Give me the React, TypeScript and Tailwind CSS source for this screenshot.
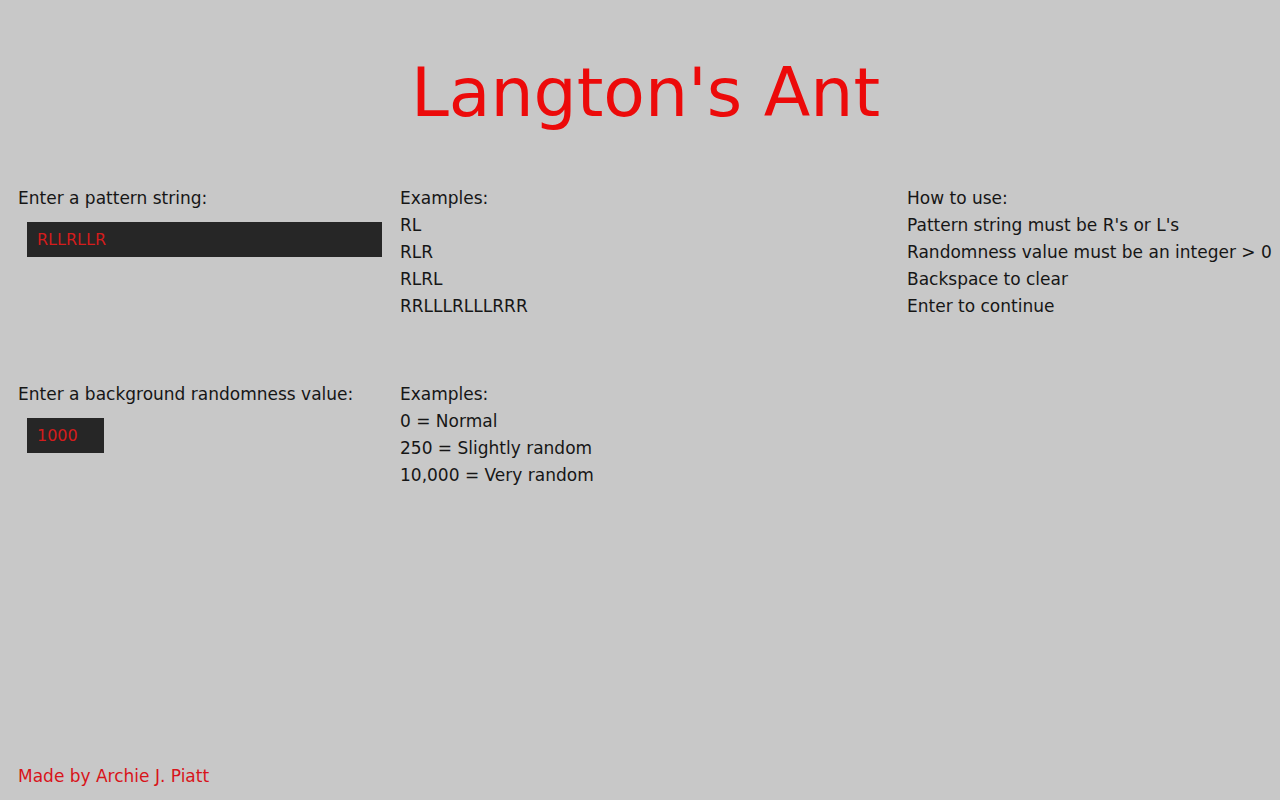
import React from "react";

const font = { fontFamily: '"DejaVu Sans", "Liberation Sans", sans-serif' };

const patternExamples = ["RL", "RLR", "RLRL", "RRLLLRLLLRRR"];
const randomExamples = ["0 = Normal", "250 = Slightly random", "10,000 = Very random"];
const howTo = [
  "Pattern string must be R's or L's",
  "Randomness value must be an integer > 0",
  "Backspace to clear",
  "Enter to continue",
];

function Field({ value, width }: { value: string; width: string }) {
  return (
    <div
      className={`ml-[9px] mt-[10px] flex h-[35px] items-center bg-[#262626] pl-[10px] text-[16px] text-[#d41c1c] ${width}`}
    >
      {value}
    </div>
  );
}

export default function App() {
  return (
    <div
      style={font}
      className="flex min-h-screen flex-col bg-[#c8c8c8] px-[18px] text-[17px] leading-[27px] text-[#161616]"
    >
      <h1 className="pl-[11px] pt-[58px] text-center text-[68px] leading-[70px] text-[#ec0a0a]">
        Langton's Ant
      </h1>

      <div className="mt-[57px] grid h-[196px] grid-cols-[382px_507px_1fr]">
        <div>
          <p>Enter a pattern string:</p>
          <Field value="RLLRLLR" width="w-[355px]" />
        </div>
        <div>
          <p>Examples:</p>
          {patternExamples.map((e) => (
            <p key={e}>{e}</p>
          ))}
        </div>
        <div className="whitespace-nowrap">
          <p>How to use:</p>
          {howTo.map((h) => (
            <p key={h}>{h}</p>
          ))}
        </div>
      </div>

      <div className="grid grid-cols-[382px_507px_1fr]">
        <div>
          <p>Enter a background randomness value:</p>
          <Field value="1000" width="w-[77px]" />
        </div>
        <div>
          <p>Examples:</p>
          {randomExamples.map((e) => (
            <p key={e}>{e}</p>
          ))}
        </div>
        <div />
      </div>

      <footer className="mt-auto pb-[10px] text-[#d8141a]">Made by Archie J. Piatt</footer>
    </div>
  );
}
